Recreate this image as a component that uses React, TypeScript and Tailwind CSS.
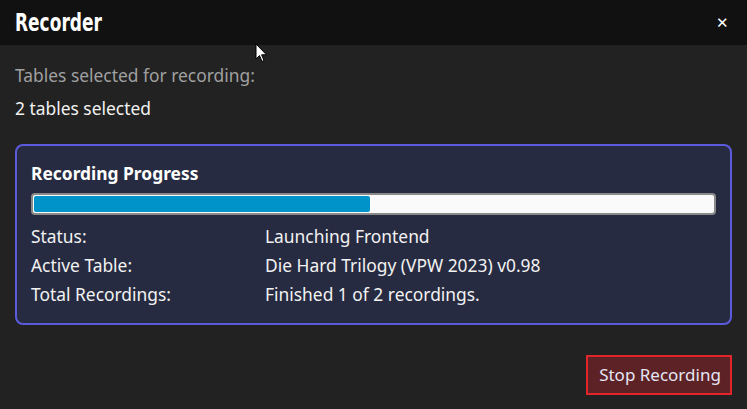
import React from 'react';

const rows = [
  { label: 'Status:', value: 'Launching Frontend' },
  { label: 'Active Table:', value: 'Die Hard Trilogy (VPW 2023) v0.98' },
  { label: 'Total Recordings:', value: 'Finished 1 of 2 recordings.' },
];

const App = () => {
  const progress = 49.5;

  return (
    <div
      className="relative flex h-[409px] w-[747px] flex-col bg-[#222222] text-[17.4px] leading-[24px] text-[#f2f2f2]"
      style={{ fontFamily: '"Noto Sans", "Liberation Sans", sans-serif' }}
    >
      {/* title bar */}
      <div className="flex h-[45px] shrink-0 items-center justify-between bg-[#111111] pl-[15px] pr-[18px]">
        <span
          className="inline-block origin-left scale-x-[0.68] text-[25px] font-bold leading-none text-white"
          style={{ fontFamily: '"DejaVu Sans", sans-serif' }}
        >
          Recorder
        </span>
        <span className="text-[15px] leading-none text-white">✕</span>
      </div>

      {/* cursor */}
      <svg className="absolute left-[255px] top-[43px]" width="13" height="20" viewBox="0 0 13 20">
        <path d="M1 1 L1 16 L4.5 12.5 L7 18.5 L9 17.5 L6.6 11.8 L11.5 11.8 Z" fill="#fff" stroke="#000" strokeWidth="1" />
      </svg>

      <div className="flex flex-1 flex-col px-[15px] pt-[18px]">
        <div className="text-[#a0a0a0]">Tables selected for recording:</div>
        <div className="mt-[9px]">2 tables selected</div>

        <div className="mt-[24px] flex h-[181px] flex-col rounded-[8px] border-2 border-[#5b5bdc] bg-[#272b41] px-[14px] pt-[15px]">
          <div className="font-bold text-white">Recording Progress</div>
          <div className="mt-[8px] h-[22px] rounded-[4px] border-2 border-[#8a8a8a] bg-[#fafafa] p-[1px]">
            <div className="h-full rounded-[2px] bg-[#0093c9]" style={{ width: `${progress}%` }} />
          </div>
          <div className="mt-[6px] flex flex-col">
            {rows.map((r) => (
              <div key={r.label} className="flex h-[29px] items-center">
                <span className="w-[234px]">{r.label}</span>
                <span>{r.value}</span>
              </div>
            ))}
          </div>
        </div>

        <div className="mt-[30px] flex justify-end">
          <button className="h-[40px] w-[146px] border-2 border-[#e0262b] bg-[#5c2225] pl-[2px] text-[17px] text-[#e6e6f5]">
            Stop Recording
          </button>
        </div>
      </div>
    </div>
  );
};

export default App;
